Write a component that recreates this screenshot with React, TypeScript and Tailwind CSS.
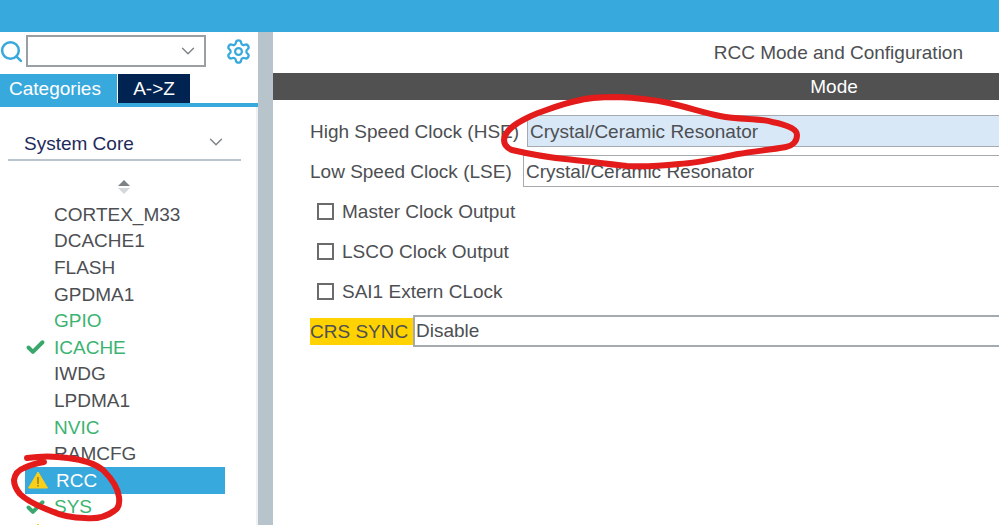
import { Search, Settings, ChevronDown, Check } from "lucide-react";

const items: { name: string; green?: boolean; check?: boolean; warn?: boolean }[] = [
  { name: "CORTEX_M33" },
  { name: "DCACHE1" },
  { name: "FLASH" },
  { name: "GPDMA1" },
  { name: "GPIO", green: true },
  { name: "ICACHE", green: true, check: true },
  { name: "IWDG" },
  { name: "LPDMA1" },
  { name: "NVIC", green: true },
  { name: "RAMCFG" },
  { name: "RCC", warn: true },
  { name: "SYS", green: true, check: true },
];

function Warn({ className }: { className?: string }) {
  return (
    <svg width="20" height="18" viewBox="0 0 20 18" className={className}>
      <path d="M10 1 L19.5 17 H0.5 Z" fill="#f9cf1a" stroke="#f9cf1a" strokeLinejoin="round" />
      <rect x="9.3" y="6" width="1.4" height="7" fill="#8a7a20" />
      <rect x="9.3" y="14" width="1.4" height="1.5" fill="#8a7a20" />
    </svg>
  );
}

function Row({ item }: { item: (typeof items)[number] }) {
  if (item.warn) {
    return (
      <div className="flex h-[26.6px] w-[200px] items-center bg-[#38a9dc] text-white">
        <Warn className="ml-[3px]" />
        <span className="ml-[8px]">{item.name}</span>
      </div>
    );
  }
  return (
    <div className={`relative flex h-[26.6px] items-center pl-[29px] ${item.green ? "text-[#3cb371]" : "text-[#4d4f53]"}`}>
      {item.check && (
        <Check size={21} strokeWidth={4.5} className="absolute left-[0px] top-[3px] text-[#3aa76d]" />
      )}
      {item.name}
    </div>
  );
}

function Option({ label }: { label: string }) {
  return (
    <div className="flex h-[40px] items-center pl-[7px]">
      <div className="h-[17px] w-[17px] border-2 border-[#6b6b6b]" />
      <span className="ml-[8px]">{label}</span>
    </div>
  );
}

export default function App() {
  return (
    <div className="relative flex h-[525px] w-[999px] flex-col overflow-hidden bg-white font-['Liberation_Sans',Arial,sans-serif] text-[19px] leading-none text-[#4d4f53]">
      <div className="h-[32px] shrink-0 bg-[#38a9dc]" />
      <div className="flex min-h-0 flex-1">
        <aside className="flex w-[258px] shrink-0 flex-col overflow-hidden">
          <div className="flex h-[42px] items-center pb-[7px] pt-[3px]">
            <Search size={25} strokeWidth={2.4} className="ml-[-1px] text-[#38a9dc]" />
            <div className="ml-[2px] flex h-[32px] w-[180px] items-center justify-end border-2 border-[#9a9fa3] pr-[5px]">
              <ChevronDown size={22} strokeWidth={1.5} className="text-[#7d8286]" />
            </div>
            <Settings size={27} strokeWidth={2} className="ml-[19px] text-[#38a9dc]" />
          </div>
          <div className="flex h-[33px] items-start border-b-[4px] border-[#38a9dc]">
            <div className="flex h-[29px] w-[117px] items-center justify-center bg-[#38a9dc] pr-[7px] text-white">Categories</div>
            <div className="ml-[1px] flex h-[29px] w-[72px] items-center justify-center bg-[#002352] text-white">A-&gt;Z</div>
          </div>
          <div className="flex flex-1 flex-col border-r-2 border-[#eef0f1] pl-[25px]">
            <div className="ml-[-17px] mt-[22px] flex h-[32px] w-[233px] shrink-0 items-start border-b-2 border-[#b9c4cc] pl-[16px] pr-[14px] pt-[2px] text-[#1f2a5c]">
              <span className="mt-[3px] flex-1">System Core</span>
              <ChevronDown size={22} strokeWidth={1.5} className="text-[#7d8286]" />
            </div>
            <div className="ml-[92px] mt-[19px] flex w-[14px] shrink-0 flex-col items-center gap-[2px]">
              <div className="h-0 w-0 border-x-[6px] border-b-[6px] border-x-transparent border-b-[#7d8286]" />
              <div className="h-0 w-0 border-x-[6px] border-t-[6px] border-x-transparent border-t-[#d5d8da]" />
            </div>
            <div className="mt-[7px] flex shrink-0 flex-col">
              {items.map((it) => (
                <Row key={it.name} item={it} />
              ))}
              <div className="flex h-[26.6px] items-start pt-[3px]">
                <Warn className="ml-[3px]" />
              </div>
            </div>
          </div>
        </aside>
        <div className="w-[15px] shrink-0 bg-[#b8c4cc]" />
        <main className="flex min-w-0 flex-1 flex-col overflow-hidden">
          <div className="flex h-[41px] items-center justify-end pr-[36px]">RCC Mode and Configuration</div>
          <div className="flex h-[27px] items-center justify-center bg-[#505150] pl-[396px] text-white">Mode</div>
          <div className="flex flex-col pl-[37px] pt-[15px]">
            <div className="flex h-[32px] items-center">
              <span className="w-[217px] shrink-0">High Speed Clock (HSE)</span>
              <div className="flex h-[32px] w-[700px] shrink-0 items-center border border-[#a5aaae] bg-[#d9e8f6] pl-[2px]">Crystal/Ceramic Resonator</div>
            </div>
            <div className="mt-[8px] flex h-[32px] items-center">
              <span className="w-[213px] shrink-0">Low Speed Clock (LSE)</span>
              <div className="flex h-[32px] w-[700px] shrink-0 items-center border border-[#a5aaae] pl-[2px]">Crystal/Ceramic Resonator</div>
            </div>
            <div className="mt-[4px] flex flex-col">
              <Option label="Master Clock Output" />
              <Option label="LSCO Clock Output" />
              <Option label="SAI1 Extern CLock" />
            </div>
            <div className="mt-[4px] flex h-[32px] items-center">
              <div className="flex h-[27px] w-[103px] shrink-0 items-center bg-[#ffd200]">CRS SYNC</div>
              <div className="flex h-[32px] w-[700px] shrink-0 items-center border-2 border-[#a5aaae] pb-[1px] pl-[1px]">Disable</div>
            </div>
          </div>
        </main>
      </div>
      <svg className="pointer-events-none absolute inset-0" width="999" height="525" viewBox="0 0 999 525" fill="none">
        <path
          d="M504 140 C505 130 516 122 538 113 C555 107 565 103 576 101 C590 97 603 97 617 97 C640 98 655 100 669 103 C690 108 705 113 720 116 C740 120 760 118 772 122 C788 125 797 129 797 135 C797 142 792 146 786 147 C770 150 755 151 738 154 C718 158 700 163 679 164 C660 166 643 167 627 166 C605 164 585 161 565 159 C545 157 525 153 512 150 C507 148 504 145 504 140 Z"
          stroke="#e31b1b"
          strokeWidth="6"
          strokeLinejoin="round"
        />
        <path
          d="M27 458 C40 456 55 456 68 458 C85 460 97 465 103 470 C112 479 118 488 119 497 C120 505 118 509 114 511 C106 517 95 519 85 518 C72 518 62 516 51 511 C38 506 27 501 20 494 C15 488 14 484 14 480 C15 474 18 470 24 468 C30 465 37 463 44 462"
          stroke="#e31b1b"
          strokeWidth="6"
          strokeLinecap="round"
        />
      </svg>
    </div>
  );
}
